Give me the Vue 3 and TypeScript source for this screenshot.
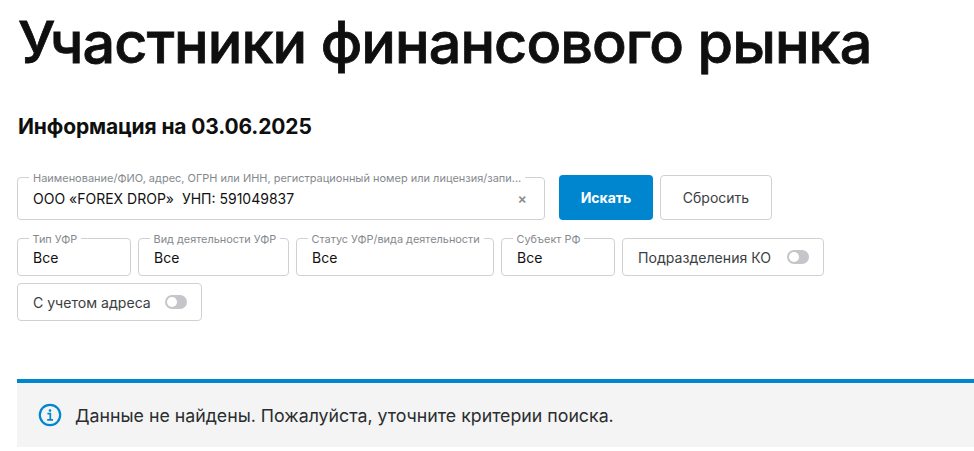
<script setup lang="ts">
const filters = [
  { label: 'Тип УФР', width: 114 },
  { label: 'Вид деятельности УФР', width: 151 },
  { label: 'Статус УФР/вида деятельности', width: 198 },
  { label: 'Субъект РФ', width: 114 },
]
</script>

<template>
  <main class="page">
    <h1 class="title">Участники финансового рынка</h1>
    <h2 class="subtitle">Информация на 03.06.2025</h2>

    <div class="search-row">
      <div class="box search">
        <span class="legend long">Наименование/ФИО, адрес, ОГРН или ИНН, регистрационный номер или лицензия/запи...</span>
        <span class="value">ООО «FOREX DROP»&nbsp; УНП: 591049837</span>
        <span class="clear">×</span>
      </div>
      <button class="btn primary">Искать</button>
      <button class="btn secondary">Сбросить</button>
    </div>

    <div class="filters">
      <div v-for="f in filters" :key="f.label" class="box filter" :style="{ width: f.width + 'px' }">
        <span class="legend">{{ f.label }}</span>
        <span class="value">Все</span>
      </div>
      <div class="box toggle-box wide">
        <span class="toggle-label">Подразделения КО</span>
        <span class="switch"><span class="knob"></span></span>
      </div>
      <div class="box toggle-box">
        <span class="toggle-label">С учетом адреса</span>
        <span class="switch"><span class="knob"></span></span>
      </div>
    </div>

    <div class="notice">
      <svg class="info" width="24" height="24" viewBox="0 0 24 24" fill="none">
        <circle cx="12" cy="12" r="10.2" stroke="#0086CE" stroke-width="2.2" />
        <circle cx="12" cy="7.6" r="1.3" fill="#0086CE" />
        <path d="M9.4 10.7H12.3V16.6M9.2 16.8H15" stroke="#0086CE" stroke-width="1.7" />
      </svg>
      <span>Данные не найдены. Пожалуйста, уточните критерии поиска.</span>
    </div>
  </main>
</template>

<style>
html, body { margin: 0; background: #fff; overflow: hidden; }
</style>

<style scoped>
.page {
  width: 974px;
  height: 451px;
  box-sizing: border-box;
  padding: 4px 0 0 17px;
  font-family: Inter, "Noto Sans", sans-serif;
  color: #0f0f0f;
  overflow: hidden;
}
.title {
  margin: 0 0 0 1px;
  font-size: 57.5px;
  line-height: 76px;
  font-weight: 500;
  -webkit-text-stroke: 0.8px #0f0f0f;
  letter-spacing: -0.9px;
  white-space: nowrap;
}
.subtitle {
  margin: 34px 0 0 1px;
  font-size: 21px;
  line-height: 26px;
  font-weight: 700;
  letter-spacing: -0.14px;
}
.search-row {
  display: flex;
  align-items: flex-end;
  margin-top: 35px;
}
.box {
  position: relative;
  box-sizing: border-box;
  border: 1px solid #cfd1d4;
  border-radius: 4px;
  background: #fff;
}
.search {
  width: 528px;
  height: 43px;
  display: flex;
  align-items: center;
  padding: 0 15px;
  margin-right: 14px;
}
.search .value { padding-top: 1px; }
.legend {
  position: absolute;
  top: -6px;
  left: 10.5px;
  padding: 0 4px;
  background: #fff;
  font-size: 10.9px;
  line-height: 12px;
  color: #85898e;
  white-space: nowrap;
}
.legend.long { left: 11px; font-size: 10.97px; }
.value {
  font-size: 14px;
  line-height: 20px;
  color: #111;
}
.clear {
  margin-left: auto;
  font-size: 14px;
  font-weight: 600;
  color: #8a8d91;
  margin-right: 2px;
}
.btn {
  height: 45px;
  box-sizing: border-box;
  border-radius: 4px;
  font-family: inherit;
  font-size: 14px;
  padding: 0;
}
.primary {
  width: 94px;
  margin-right: 7px;
  background: #0086ce;
  border: none;
  color: #fff;
  font-weight: 700;
}
.secondary {
  width: 112px;
  background: #fff;
  border: 1px solid #cfd1d4;
  color: #3b3e42;
}
.filters {
  display: flex;
  flex-wrap: wrap;
  gap: 7px;
  width: 820px;
  margin-top: 18px;
}
.filter {
  height: 38px;
  padding: 8px 15px 0;
}
.toggle-box {
  height: 38px;
  width: 185px;
  display: flex;
  align-items: center;
  padding: 0 14px 0 15px;
  justify-content: space-between;
}
.wide { width: 202px; }
.toggle-label {
  font-size: 14.1px;
  color: #3b3e42;
  white-space: nowrap;
}
.switch {
  display: block;
  width: 22px;
  height: 14px;
  border-radius: 7px;
  background: #c4c6c9;
  position: relative;
}
.knob {
  position: absolute;
  left: 2px;
  top: 2px;
  width: 10px;
  height: 10px;
  border-radius: 50%;
  background: #fff;
}
.notice {
  display: flex;
  align-items: center;
  gap: 13px;
  height: 68px;
  box-sizing: border-box;
  margin-top: 58px;
  border-top: 4px solid #0086ce;
  background: #f4f4f4;
  padding-left: 21px;
  font-size: 17.75px;
  color: #2b2d30;
}
.info { flex: none; }
</style>
